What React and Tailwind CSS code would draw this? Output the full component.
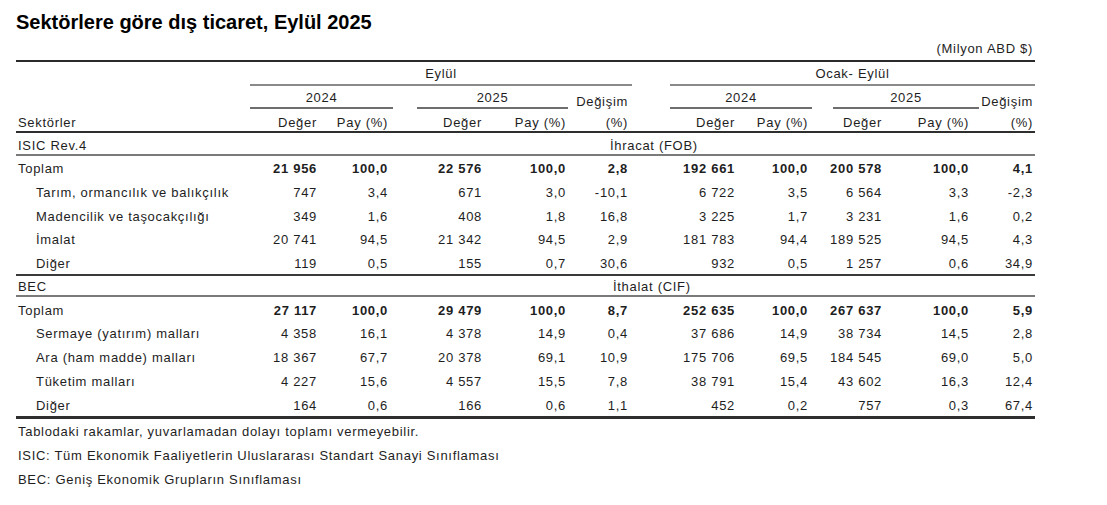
const COLS = 'grid grid-cols-[234px_69px_71px_94px_84px_62px_107px_73px_74px_87px_64px]';

const exports = [
  ['Tarım, ormancılık ve balıkçılık', '747', '3,4', '671', '3,0', '-10,1', '6 722', '3,5', '6 564', '3,3', '-2,3'],
  ['Madencilik ve taşocakçılığı', '349', '1,6', '408', '1,8', '16,8', '3 225', '1,7', '3 231', '1,6', '0,2'],
  ['İmalat', '20 741', '94,5', '21 342', '94,5', '2,9', '181 783', '94,4', '189 525', '94,5', '4,3'],
  ['Diğer', '119', '0,5', '155', '0,7', '30,6', '932', '0,5', '1 257', '0,6', '34,9'],
];

const imports = [
  ['Sermaye (yatırım) malları', '4 358', '16,1', '4 378', '14,9', '0,4', '37 686', '14,9', '38 734', '14,5', '2,8'],
  ['Ara (ham madde) malları', '18 367', '67,7', '20 378', '69,1', '10,9', '175 706', '69,5', '184 545', '69,0', '5,0'],
  ['Tüketim malları', '4 227', '15,6', '4 557', '15,5', '7,8', '38 791', '15,4', '43 602', '16,3', '12,4'],
  ['Diğer', '164', '0,6', '166', '0,6', '1,1', '452', '0,2', '757', '0,3', '67,4'],
];

const exportTotal = ['Toplam', '21 956', '100,0', '22 576', '100,0', '2,8', '192 661', '100,0', '200 578', '100,0', '4,1'];
const importTotal = ['Toplam', '27 117', '100,0', '29 479', '100,0', '8,7', '252 635', '100,0', '267 637', '100,0', '5,9'];

function Row({ cells, total }) {
  return (
    <div className={`${COLS} h-[23.7px] pt-[2px] items-center`}>
      <div className={total ? 'pl-[2px]' : 'pl-[20px]'}>{cells[0]}</div>
      {cells.slice(1).map((c, i) => (
        <div key={i} className={`text-right pr-[2px] ${total ? 'font-bold' : ''}`}>{c}</div>
      ))}
    </div>
  );
}

function Section({ total, rows }) {
  return (
    <>
      <Row cells={total} total />
      {rows.map((r, i) => (
        <Row key={i} cells={r} />
      ))}
    </>
  );
}

export default function App() {
  return (
    <div className="bg-white w-[1107px] h-[505px] text-[#1e1e1e] font-['Liberation_Sans',Arial,sans-serif]">
      <div className="pl-[16px] pt-[10px]">
        <h1 className="text-[20px] leading-[24px] font-bold text-black">Sektörlere göre dış ticaret, Eylül 2025</h1>

        <div className="w-[1019px] text-[13px] leading-[15px] tracking-[0.7px]">
          <div className="h-[26px] flex items-end justify-end pb-[4px] pr-[2px]">(Milyon ABD $)</div>

          <div className="border-t-2 border-[#2a2a2a]">
            {/* period header */}
            <div className={`${COLS} h-[24px]`}>
              <div />
              <div className="col-span-5 mr-[-2px] border-b-2 border-[#8a8a8a] flex items-center justify-center">Eylül</div>
              <div className="col-span-5 ml-[40px] border-b-2 border-[#8a8a8a] flex items-center justify-center">Ocak- Eylül</div>
            </div>

            {/* year header */}
            <div className={`${COLS} h-[23px]`}>
              <div />
              <div className="col-span-2 mr-[-3px] border-b-2 border-[#6e6e6e] flex items-center justify-center pt-[1px]">2024</div>
              <div className="col-span-2 ml-[27px] border-b-2 border-[#6e6e6e] flex items-center justify-center pt-[1px]">2025</div>
              <div className="flex items-end justify-end pr-[2px]">Değişim</div>
              <div className="col-span-2 ml-[40px] mr-[-2px] border-b-2 border-[#6e6e6e] flex items-center justify-center pt-[1px]">2024</div>
              <div className="col-span-2 ml-[23px] mr-[-8px] border-b-2 border-[#6e6e6e] flex items-center justify-center pt-[1px]">2025</div>
              <div className="flex items-end justify-end pr-[2px]">Değişim</div>
            </div>

            {/* column header */}
            <div className={`${COLS} h-[24px] items-end pb-[1px] border-b-2 border-[#2e2e2e]`}>
              <div className="pl-[2px]">Sektörler</div>
              <div className="text-right pr-[2px]">Değer</div>
              <div className="text-right pr-[2px]">Pay (%)</div>
              <div className="text-right pr-[2px]">Değer</div>
              <div className="text-right pr-[2px]">Pay (%)</div>
              <div className="text-right pr-[2px]">(%)</div>
              <div className="text-right pr-[2px]">Değer</div>
              <div className="text-right pr-[2px]">Pay (%)</div>
              <div className="text-right pr-[2px]">Değer</div>
              <div className="text-right pr-[2px]">Pay (%)</div>
              <div className="text-right pr-[2px]">(%)</div>
            </div>

            {/* exports */}
            <div className={`${COLS} h-[23px] items-end pb-[1px] border-b-2 border-[#7a7a7a]`}>
              <div className="col-span-5 pl-[2px]">ISIC Rev.4</div>
              <div className="col-span-6 pl-[42px]">İhracat (FOB)</div>
            </div>
            <div className="border-b-2 border-[#3a3a3a]">
              <Section total={exportTotal} rows={exports} />
            </div>

            {/* imports */}
            <div className={`${COLS} h-[21px] items-center pt-[1px] border-b-2 border-[#7a7a7a]`}>
              <div className="col-span-5 pl-[2px]">BEC</div>
              <div className="col-span-6 pl-[45px]">İthalat (CIF)</div>
            </div>
            <div className="border-b-[3px] border-[#2e2e2e]">
              <Section total={importTotal} rows={imports} />
            </div>
          </div>

          <div className="pt-[1px] pl-[2px]">
            <p className="h-[24px] flex items-center">Tablodaki rakamlar, yuvarlamadan dolayı toplamı vermeyebilir.</p>
            <p className="h-[24px] flex items-center">ISIC: Tüm Ekonomik Faaliyetlerin Uluslararası Standart Sanayi Sınıflaması</p>
            <p className="h-[24px] flex items-center">BEC: Geniş Ekonomik Grupların Sınıflaması</p>
          </div>
        </div>
      </div>
    </div>
  );
}
